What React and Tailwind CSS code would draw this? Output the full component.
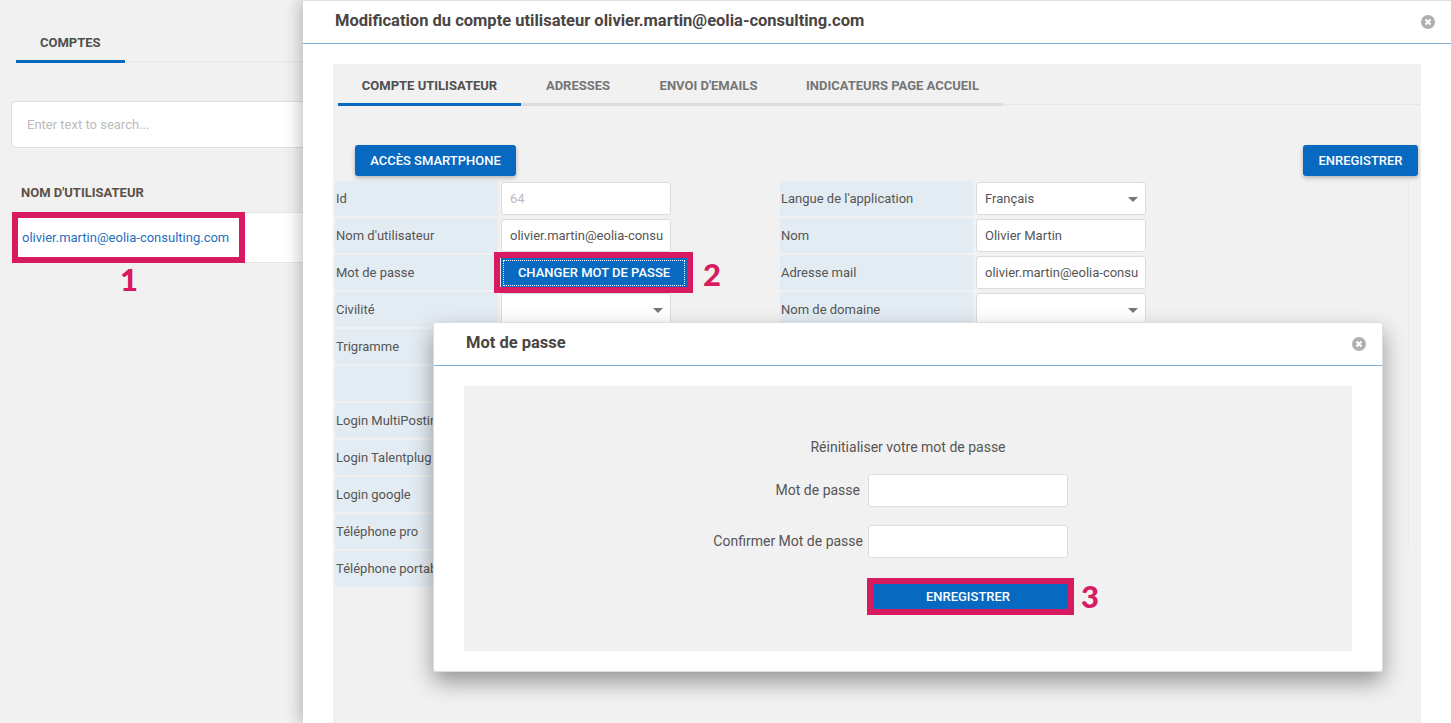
import React from 'react';

const leftRows = [
  { label: 'Id', value: '64', muted: true },
  { label: "Nom d'utilisateur", value: 'olivier.martin@eolia-consulting.com' },
  { label: 'Mot de passe', button: true },
  { label: 'Civilité', select: true },
  { label: 'Trigramme' },
  { label: '' },
  { label: 'Login MultiPosting' },
  { label: 'Login Talentplug' },
  { label: 'Login google' },
  { label: 'Téléphone pro' },
  { label: 'Téléphone portable' },
];

const rightRows = [
  { label: "Langue de l'application", value: 'Français', select: true },
  { label: 'Nom', value: 'Olivier Martin' },
  { label: 'Adresse mail', value: 'olivier.martin@eolia-consulting.com' },
  { label: 'Nom de domaine', select: true },
];

function CloseIcon() {
  return (
    <svg width="14" height="14" viewBox="0 0 14 14">
      <circle cx="7" cy="7" r="7" fill="#b0b0b0" />
      <path d="M4.5 4.5l5 5m0-5l-5 5" stroke="#fff" strokeWidth="2" />
    </svg>
  );
}

function Field({ row }) {
  if (row.button) {
    return (
      <div className="mt-[2px] flex h-[30px] w-[186px] items-center justify-center bg-[#0869c1] text-[13px] font-medium text-white outline-1 outline-offset-[-3px] outline-dotted outline-white">
        CHANGER MOT DE PASSE
      </div>
    );
  }
  return (
    <div className="relative flex h-[33px] w-[170px] items-center overflow-hidden rounded-[3px] border border-[#dcdcdc] bg-white pl-[8px] pr-[7px]">
      <span className={`whitespace-nowrap ${row.muted ? 'text-[#bbbbbb]' : ''}`}>{row.value}</span>
      {row.select && (
        <span className="absolute right-[7px] top-[14px] h-0 w-0 border-x-[5px] border-t-[5px] border-x-transparent border-t-[#777777]" />
      )}
      {!row.select && <span className="absolute inset-y-0 right-0 w-[7px] bg-white" />}
    </div>
  );
}

function FormRow({ row, labelWidth }) {
  return (
    <div className="flex h-[37px] items-start">
      <div className={`flex h-[35px] shrink-0 items-center bg-[#e4ecf3] pl-[1px] ${labelWidth}`}>{row.label}</div>
      <div className="pl-[3px] pt-[1px]">
        <Field row={row} />
      </div>
    </div>
  );
}

export default function App() {
  return (
    <div className="relative h-[723px] w-[1451px] overflow-hidden bg-[#f1f1f1] font-['Roboto',sans-serif] text-[13px] text-[#555555]">
      {/* Liste des comptes */}
      <div className="w-[303px]">
        <div className="ml-[16px] h-[62px] border-b border-[#e6e6e6] pt-[35px]">
          <div className="relative h-[26px] w-[109px] pl-[24px] text-[13px] leading-[15px] font-bold text-[#4f4f4f]">
            COMPTES
            <span className="absolute inset-x-0 bottom-[-2px] h-[3px] bg-[#0869c1]" />
          </div>
        </div>
        <div className="ml-[11px] mt-[39px] flex h-[47px] items-center rounded-l-[5px] border border-r-0 border-[#dddddd] bg-white pl-[15px] text-[#bbbbbb]">
          Enter text to search...
        </div>
        <div className="ml-[21px] mt-[37px] h-[16px] text-[13px] leading-[16px] font-bold text-[#5b5048]">NOM D'UTILISATEUR</div>
        <div className="ml-[13px] mt-[11px] flex h-[51px] items-center border-y border-[#e6e6e6] bg-white pl-[9px] text-[#1f6fc0]">
          olivier.martin@eolia-consulting.com
        </div>
      </div>

      {/* Fenêtre : modification du compte */}
      <div className="absolute inset-y-0 left-[303px] right-0 bg-white shadow-[-4px_0_14px_rgba(0,0,0,0.22)]">
        <div className="flex h-[44px] items-center justify-between border-t border-b border-t-[#dedede] border-b-[#7fb0d8] pl-[32px] pr-[16px]">
          <span className="mt-[-2px] text-[16.5px] font-bold text-[#4a4543]">Modification du compte utilisateur olivier.martin@eolia-consulting.com</span>
          <CloseIcon />
        </div>
        <div className="relative ml-[30px] mr-[30px] mt-[20px] h-[659px] bg-[#f1f1f1] pl-[2px]">
          <div className="flex h-[41px] border-b border-[#e6e6e6] pl-[3px] text-[13px] font-bold text-[#757575]">
            <div className="flex h-[42px] w-[183px] items-center justify-center border-b-[3px] border-[#0869c1] pt-[5px] text-[#4f4f4f]">COMPTE UTILISATEUR</div>
            <div className="flex h-[42px] w-[114px] items-center justify-center border-b-[3px] border-[#dddddd] pt-[5px]">ADRESSES</div>
            <div className="flex h-[42px] w-[147px] items-center justify-center border-b-[3px] border-[#dddddd] pt-[5px]">ENVOI D'EMAILS</div>
            <div className="flex h-[42px] w-[221px] items-center justify-center border-b-[3px] border-[#dddddd] pt-[5px]">INDICATEURS PAGE ACCUEIL</div>
          </div>
          <div className="flex justify-between pl-[20px] pr-[3px] pt-[40px]">
            <div className="flex h-[31px] w-[161px] items-center justify-center rounded-[3px] bg-[#0869c1] pt-[1px] text-[13px] font-medium text-white shadow-[0_2px_4px_rgba(0,0,0,0.25)]">ACCÈS SMARTPHONE</div>
            <div className="flex h-[31px] w-[115px] items-center justify-center rounded-[3px] bg-[#0869c1] pt-[1px] text-[13px] font-medium text-white shadow-[0_2px_4px_rgba(0,0,0,0.25)]">ENREGISTRER</div>
          </div>
          <div className="flex pt-[5px]">
            <div className="w-[445px]">
              {leftRows.map((row) => (
                <FormRow key={row.label} row={row} labelWidth="w-[163px]" />
              ))}
            </div>
            <div className="w-[628px]">
              {rightRows.map((row) => (
                <FormRow key={row.label} row={row} labelWidth="w-[193px]" />
              ))}
            </div>
            <div className="h-[367px] w-[1px] bg-[#e4ecf3]" />
          </div>
        </div>
      </div>

      {/* Fenêtre : mot de passe */}
      <div className="absolute left-[433px] top-[322px] h-[350px] w-[950px] rounded-[3px] border border-[#dddddd] bg-white shadow-[0_10px_22px_rgba(0,0,0,0.38)]">
        <div className="flex h-[43px] items-center justify-between border-b border-[#7fb0d8] pl-[32px] pr-[16px]">
          <span className="mt-[-2px] text-[16.5px] font-bold text-[#4a4543]">Mot de passe</span>
          <CloseIcon />
        </div>
        <div className="ml-[30px] mr-[30px] mt-[20px] h-[265px] bg-[#f1f1f1] pt-[53px] text-[14px]">
          <div className="h-[16px] text-center leading-[16px]">Réinitialiser votre mot de passe</div>
          <div className="mt-[19px] flex h-[33px] items-center">
            <div className="w-[404px] pr-[8px] text-right">Mot de passe</div>
            <div className="h-[33px] w-[200px] rounded-[3px] border border-[#dcdcdc] bg-white" />
          </div>
          <div className="mt-[18px] flex h-[33px] items-center">
            <div className="w-[404px] pr-[5px] text-right">Confirmer Mot de passe</div>
            <div className="h-[33px] w-[200px] rounded-[3px] border border-[#dcdcdc] bg-white" />
          </div>
          <div className="ml-[404px] mt-[26px] flex h-[25px] w-[200px] items-center justify-center bg-[#0869c1] text-[13px] font-medium text-white">ENREGISTRER</div>
        </div>
      </div>

      {/* Annotations */}
      <div className="absolute left-[12px] top-[212px] h-[51px] w-[233px] border-[6px] border-[#d81b60]" />
      <div className="absolute left-[494px] top-[252px] h-[41px] w-[199px] border-[6px] border-[#d81b60]" />
      <div className="absolute left-[867px] top-[578px] h-[37px] w-[207px] border-[6px] border-[#d81b60]" />
      <span className="absolute left-[120px] top-[262px] font-['Lato',sans-serif] text-[31px] leading-[34px] font-black text-[#d81b60]">1</span>
      <span className="absolute left-[703px] top-[257px] font-['Lato',sans-serif] text-[31px] leading-[34px] font-black text-[#d81b60]">2</span>
      <span className="absolute left-[1081px] top-[579px] font-['Lato',sans-serif] text-[31px] leading-[34px] font-black text-[#d81b60]">3</span>
    </div>
  );
}
